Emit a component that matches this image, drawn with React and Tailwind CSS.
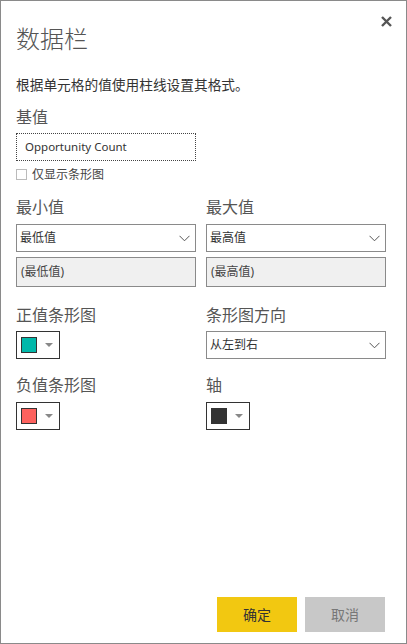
import React from "react";

function Chevron() {
  return (
    <svg width="11" height="7" viewBox="0 0 11 7" className="shrink-0">
      <path d="M0.5 0.8 L5.5 5.8 L10.5 0.8" fill="none" stroke="#555" strokeWidth="1" />
    </svg>
  );
}

function Select({ label }) {
  return (
    <div className="h-[28px] w-[180px] border border-[#8a8a8a] bg-white flex items-center justify-between pl-[3px] pr-[5px]">
      <span className="text-[12px] leading-none text-[#333]">{label}</span>
      <Chevron />
    </div>
  );
}

function ColorPicker({ color }) {
  return (
    <div className="h-[28px] w-[44px] border border-[#333] bg-white flex items-center pl-[4px]">
      <div className="w-[16px] h-[16px] border border-[#333]" style={{ backgroundColor: color }} />
      <svg width="8" height="4" viewBox="0 0 8 4" className="ml-[8px]">
        <path d="M0 0 L8 0 L4 4 Z" fill="#888" />
      </svg>
    </div>
  );
}

export default function App() {
  return (
    <div className="relative w-[407px] h-[644px] border border-[#8a8a8a] bg-white flex flex-col px-[15px] font-['Segoe_UI','Noto_Sans','Noto_Sans_CJK_SC',sans-serif] text-[#333]">
      <button className="absolute top-[14px] right-[14px] w-[12px] h-[12px] flex items-center justify-center">
        <svg width="11" height="11" viewBox="0 0 11 11">
          <path d="M1 1 L10 10 M10 1 L1 10" stroke="#555" strokeWidth="2.4" />
        </svg>
      </button>

      <div className="mt-[26px] h-[24px] text-[24px] leading-[24px] text-[#555] font-light">数据栏</div>
      <div className="mt-[27px] h-[14px] text-[13.7px] leading-[14px] text-[#333]">根据单元格的值使用柱线设置其格式。</div>
      <div className="mt-[17px] h-[16px] text-[16px] leading-[16px] text-[#555]">基值</div>
      <div className="mt-[8px] h-[28px] w-[180px] border border-dotted border-[#444] flex items-center pl-[8px]">
        <span className="text-[11.5px] leading-none text-[#333]">Opportunity Count</span>
      </div>
      <div className="mt-[7px] h-[13px] flex items-center gap-[5px]">
        <div className="w-[11px] h-[11px] border border-[#bbb] bg-white" />
        <span className="text-[12px] leading-none text-[#444]">仅显示条形图</span>
      </div>

      <div className="grid grid-cols-[180px_180px] gap-x-[10px]">
        <div className="flex flex-col">
          <div className="mt-[18px] h-[16px] text-[16px] leading-[16px] text-[#555]">最小值</div>
          <div className="mt-[9px]"><Select label="最低值" /></div>
          <div className="mt-[5px] h-[30px] w-[180px] border border-[#8a8a8a] bg-[#f0f0f0] flex items-center pl-[4px]">
            <span className="text-[12px] leading-none text-[#444]">(最低值)</span>
          </div>
        </div>
        <div className="flex flex-col">
          <div className="mt-[18px] h-[16px] text-[16px] leading-[16px] text-[#555]">最大值</div>
          <div className="mt-[9px]"><Select label="最高值" /></div>
          <div className="mt-[5px] h-[30px] w-[180px] border border-[#8a8a8a] bg-[#f0f0f0] flex items-center pl-[4px]">
            <span className="text-[12px] leading-none text-[#444]">(最高值)</span>
          </div>
        </div>

        <div className="flex flex-col">
          <div className="mt-[20px] h-[16px] text-[16px] leading-[16px] text-[#555]">正值条形图</div>
          <div className="mt-[8px]"><ColorPicker color="#01b8aa" /></div>
        </div>
        <div className="flex flex-col">
          <div className="mt-[20px] h-[16px] text-[16px] leading-[16px] text-[#555]">条形图方向</div>
          <div className="mt-[8px]"><Select label="从左到右" /></div>
        </div>

        <div className="flex flex-col">
          <div className="mt-[18px] h-[16px] text-[16px] leading-[16px] text-[#555]">负值条形图</div>
          <div className="mt-[9px]"><ColorPicker color="#fd625e" /></div>
        </div>
        <div className="flex flex-col">
          <div className="mt-[18px] h-[16px] text-[16px] leading-[16px] text-[#555]">轴</div>
          <div className="mt-[9px]"><ColorPicker color="#333333" /></div>
        </div>
      </div>

      <div className="flex-1" />
      <div className="flex justify-end gap-[8px] pb-[11px] pr-[6px]">
        <button className="w-[80px] h-[35px] bg-[#f2c811] text-[14px] text-[#333]">确定</button>
        <button className="w-[80px] h-[35px] bg-[#c8c8c8] text-[14px] text-[#777]">取消</button>
      </div>
    </div>
  );
}
